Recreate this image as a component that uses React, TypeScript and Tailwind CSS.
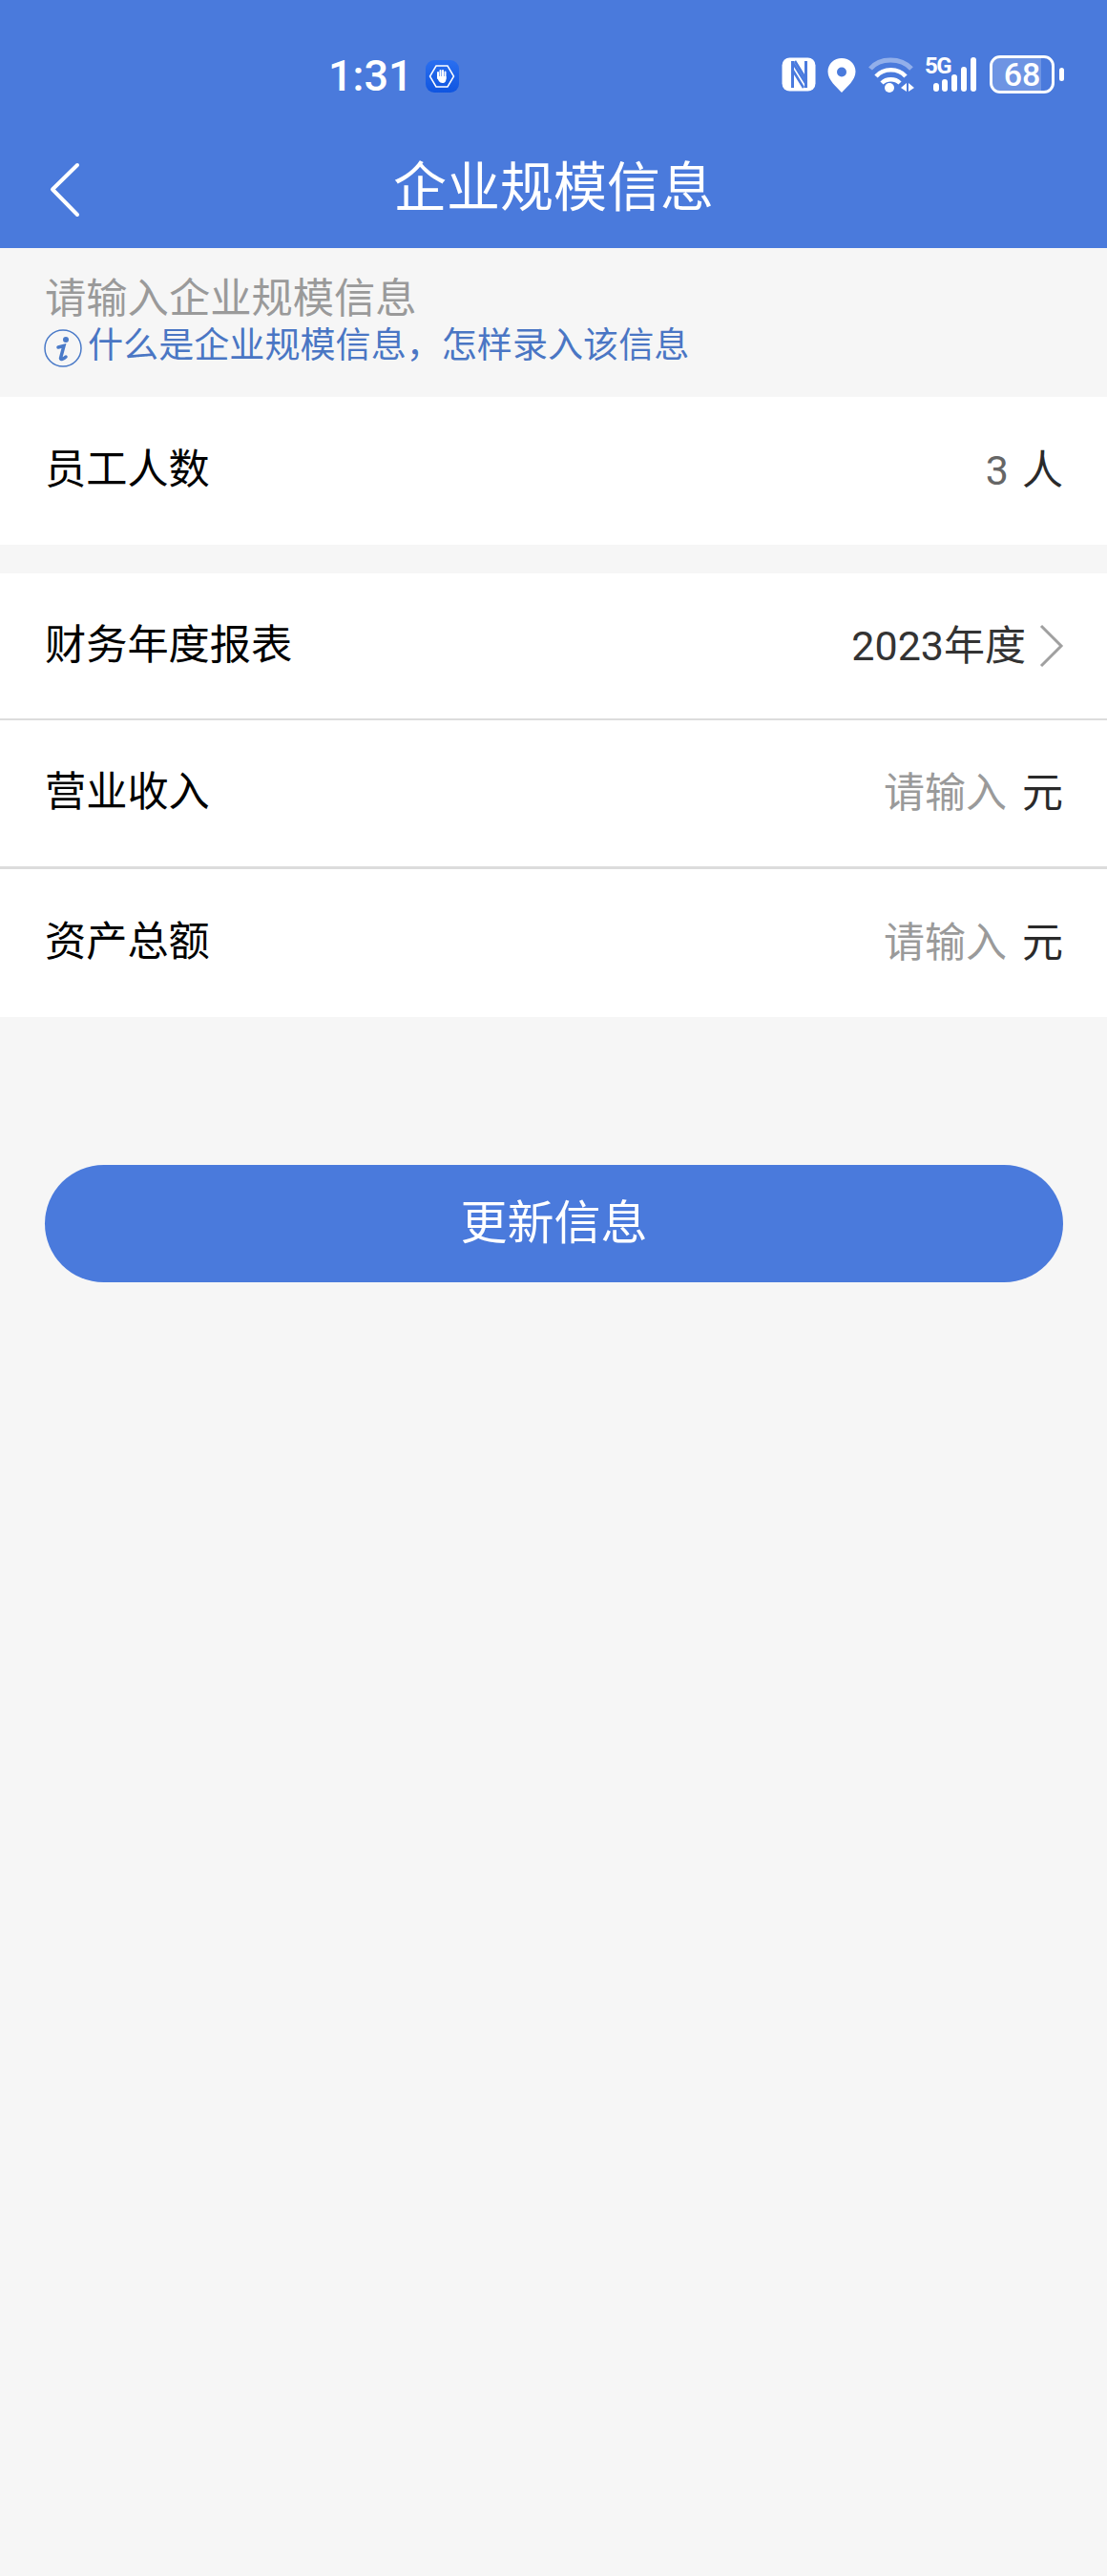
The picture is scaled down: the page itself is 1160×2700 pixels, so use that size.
const cjk = "font-['Roboto','Noto_Sans_CJK_SC',sans-serif]";

const rows = [
  { label: '财务年度报表', kind: 'year', cls: 'h-[154px] border-b-[2px]' },
  { label: '营业收入', kind: 'input', cls: 'h-[156px] border-b-[3px]' },
  { label: '资产总额', kind: 'input', cls: 'h-[155px]' },
];

const StatusIcons = () => (
  <div className="mt-[58px] flex h-[40px] items-center">
    <svg width="36" height="36" viewBox="0 0 36 36" className="mr-[12px]" fill="none">
      <rect x="0.500" y="0.500" width="35" height="35" rx="8" fill="#fff" />
      <path d="M11.500 4v28M25.500 4v28" stroke="#4a7ade" strokeWidth="3" />
      <path d="M12 6l13 21M12 14l11 18M14 4l11 18" stroke="#4a7ade" strokeWidth="2.500" />
    </svg>
    <svg width="30" height="40" viewBox="0 0 30 40" className="mr-[12px]">
      <path fillRule="evenodd" d="M15 3C7 3 0.500 9 0.500 17c0 9 9 16 14.500 22 5.500-6 14.500-13 14.500-22C29.500 9 23 3 15 3zm0 9.500a5 5 0 110 10 5 5 0 010-10z" fill="#fff" />
    </svg>
    <svg width="50" height="40" viewBox="0 0 50 40" className="mr-[10px]" fill="none">
      <path d="M3 14C13 2 35 2 46 14" stroke="#fff" strokeOpacity="0.4" strokeWidth="5" />
      <path d="M9 22c8-9 23-9 31 0" stroke="#fff" strokeWidth="4.500" />
      <path d="M15 29c5-5 14-5 19 0" stroke="#fff" strokeWidth="4.500" />
      <circle cx="23" cy="34" r="5" fill="#fff" />
      <path d="M35 34l6-5v9zM43 29l6 5-6 4z" fill="#fff" />
    </svg>
    <div className="relative mr-[12px] h-[40px] w-[56px]">
      <span className="absolute left-0 top-[-1px] text-[24px] font-bold leading-[24px] tracking-[-1.500px] text-white font-['Roboto',sans-serif]">5G</span>
      <svg width="56" height="40" viewBox="0 0 56 40" className="absolute left-0 top-0">
        <rect x="9" y="29" width="6" height="9" rx="3" fill="#fff" />
        <rect x="18" y="25" width="6" height="13" rx="3" fill="#fff" />
        <rect x="28" y="20" width="6" height="18" rx="3" fill="#fff" />
        <rect x="38" y="12" width="6" height="26" rx="3" fill="#fff" />
        <rect x="48" y="2" width="6" height="36" rx="3" fill="#fff" />
      </svg>
    </div>
    <div className="relative flex h-[40px] w-[68px] items-center justify-center overflow-hidden rounded-[11px] border-[3px] border-white">
      <div className="absolute inset-y-0 left-0 w-[82%] bg-white/20" />
      <span className="relative text-[34px] font-medium leading-none text-white font-['Roboto',sans-serif]">68</span>
    </div>
    <div className="ml-[5px] h-[14px] w-[5px] rounded-full bg-white" />
  </div>
);

const App = () => {
  return (
    <div className={`flex h-[2700px] w-[1160px] flex-col bg-[#f6f6f6] ${cjk}`}>
      <header className="h-[260px] bg-[#4a7adc]">
        <div className="flex h-[150px] items-start justify-between pr-[45px]">
          <div className="ml-[344px] mt-[50px] flex h-[60px] items-center">
            <span className="text-[45px] font-medium leading-[60px] text-white">1:31</span>
            <div className="ml-[13px] flex h-[34px] w-[35px] items-center justify-center rounded-[9px] bg-gradient-to-b from-[#2a6ff0] to-[#0f55e0]">
              <svg width="28" height="26" viewBox="0 0 28 26" fill="none">
                <path d="M8 2h12l6.500 11L20 24H8L1.500 13z" stroke="#fff" strokeWidth="1.500" />
                <path d="M10 9v6M12.500 7v7M15 7v7M17.500 8.500v7" stroke="#fff" strokeWidth="2" strokeLinecap="round" />
                <path d="M9.500 13c0 4 2 7 5 7s4-2 4-5v-2h-9z" fill="#fff" />
              </svg>
            </div>
          </div>
          <StatusIcons />
        </div>
        <div className="relative flex h-[110px] items-start justify-center">
          <svg width="40" height="60" viewBox="0 0 40 60" fill="none" className="absolute left-[48px] top-[20px]">
            <path d="M33 3L7 28.500 33 55" stroke="#fff" strokeWidth="4" strokeLinecap="round" strokeLinejoin="round" />
          </svg>
          <h1 className="mt-[11px] text-[56px] font-normal leading-[72px] text-white">企业规模信息</h1>
        </div>
      </header>

      <div className="h-[156px] px-[47px] pt-[27px]">
        <p className="text-[43.300px] leading-[54px] text-[#9a9a9a]">请输入企业规模信息</p>
        <div className="flex items-center">
          <svg width="40" height="40" viewBox="0 0 40 40" fill="none" className="-ml-[1px] mr-[6px] mt-[4px] shrink-0">
            <circle cx="20" cy="20" r="19" stroke="#4a7ac8" strokeWidth="1.500" />
            <circle cx="23" cy="11" r="3" fill="#4a7ac8" />
            <path d="M15 19l6-1.500-3.500 13c0 2 3 1 5.500-1.500" stroke="#4a7ac8" strokeWidth="3.500" strokeLinecap="round" />
          </svg>
          <p className="text-[37.100px] leading-[44px] text-[#4a76c4]">什么是企业规模信息，怎样录入该信息</p>
        </div>
      </div>

      <div className="flex h-[155px] items-center justify-between bg-white pl-[47px] pr-[46px]">
        <span className="text-[43.200px] text-black">员工人数</span>
        <div className="flex items-center gap-[14px] text-[43px]">
          <span className="text-[#666666]">3</span>
          <span className="text-[#2a2a2a]">人</span>
        </div>
      </div>

      <div className="mt-[30px] bg-white">
        {rows.map((row) => (
          <div
            key={row.label}
            className={`flex items-center justify-between border-[#dcdcdc] pl-[47px] pr-[46px] ${row.cls}`}
          >
            <span className="text-[43.200px] text-black">{row.label}</span>
            {row.kind === 'year' ? (
              <div className="-mr-[2px] flex items-center">
                <span className="text-[43px] text-[#333333]">2023年度</span>
                <svg width="28" height="46" viewBox="0 0 28 46" fill="none" className="ml-[13px]">
                  <path d="M3 2l21 21L3 44" stroke="#a0a0a0" strokeWidth="3" />
                </svg>
              </div>
            ) : (
              <div className="flex items-center gap-[16px] text-[43px]">
                <span className="text-[#9a9a9a]">请输入</span>
                <span className="text-[#2a2a2a]">元</span>
              </div>
            )}
          </div>
        ))}
      </div>

      <button className="ml-[47px] mr-[46px] mt-[155px] h-[123px] rounded-full bg-[#4a7adc] text-[49px] text-white">
        更新信息
      </button>
    </div>
  );
};

export default App;
